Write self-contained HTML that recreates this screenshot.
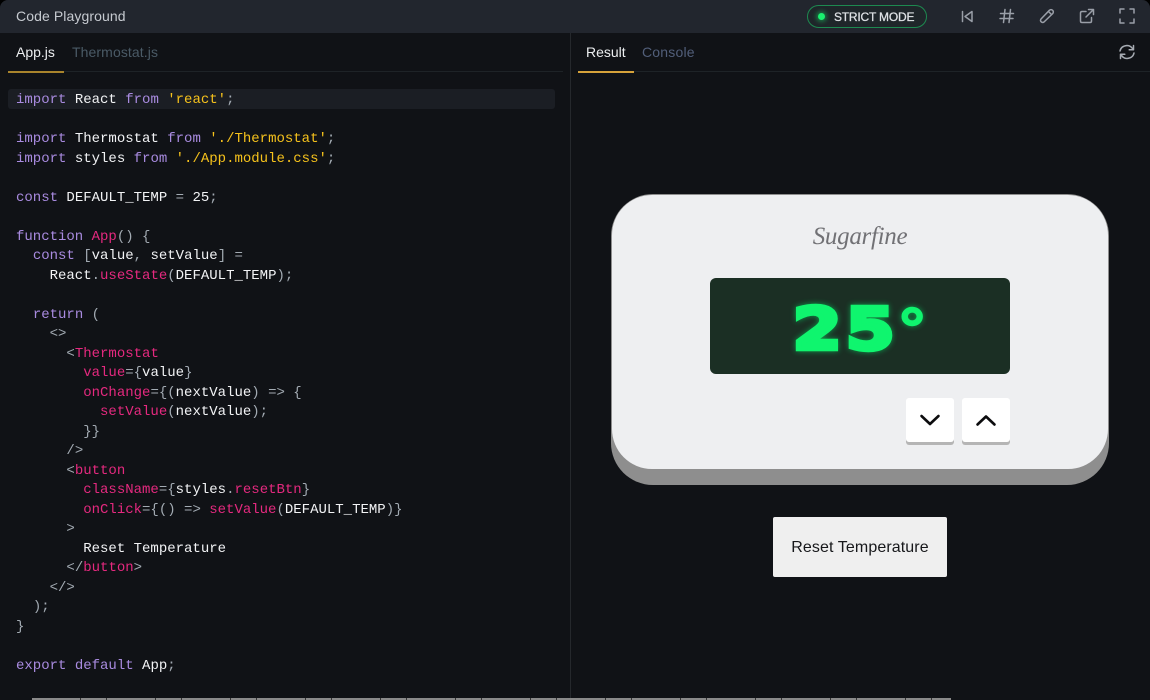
<!DOCTYPE html>
<html><head><meta charset="utf-8"><style>
*{box-sizing:border-box;margin:0;padding:0}
html,body{width:1150px;height:700px;overflow:hidden;background:#000}
body{font-family:"Liberation Sans",sans-serif;position:relative}
#app{position:absolute;left:0;top:0;width:1150px;height:700px;background:#101216;border-radius:8px 8px 0 0;overflow:hidden}
.abs{position:absolute}
#hdr{left:0;top:0;width:1150px;height:33px;background:#22262e}
.tab{position:absolute;top:44px;font-size:14px;line-height:17px;white-space:nowrap}
#code{position:absolute;left:16px;top:91px;font:14px/19.52px "Liberation Mono",monospace;color:#f2f3f5;white-space:pre}
.k{color:#a98be0}.s{color:#f6c21c}.p{color:#e5297f}.g{color:#a3abb3}
svg.ic{position:absolute;fill:none;stroke:#9a9fa8;stroke-width:1.5;stroke-linecap:round;stroke-linejoin:round}
</style></head><body>
<div id="app">
<div class="abs" id="hdr"></div>
<div class="abs" style="left:16px;top:8px;font-size:14px;line-height:17px;color:#c6cad0;letter-spacing:.1px">Code Playground</div>

<div class="abs" style="left:807px;top:5px;width:120px;height:23px;border:1.5px solid #1d8a50;border-radius:12px;background:#1f262a"></div>
<div class="abs" style="left:818px;top:13px;width:7px;height:7px;border-radius:50%;background:#1af06f;box-shadow:0 0 4px 2px rgba(20,220,100,.45)"></div>
<div class="abs" style="left:834px;top:10px;font-size:12px;line-height:14px;color:#dfe2e6;letter-spacing:-.2px;-webkit-text-stroke:.25px #dfe2e6;white-space:nowrap">STRICT MODE</div>

<svg class="ic" style="left:960px;top:9px" width="14" height="15" viewBox="0 0 14 15"><path d="M2.5 2.5v10M12 2.5v10L5 7.5z"/></svg>
<svg class="ic" style="left:999px;top:8px" width="16" height="16" viewBox="0 0 16 16"><path d="M6 1.5L4.5 14.500M11.500 1.500L10 14.500M1.500 5.500H14.500M1 10.500H14"/></svg>
<svg class="ic" style="left:1039px;top:8px" width="16" height="16" viewBox="0 0 16 16"><path d="M2 11L10.500 2.200Q12 1 13.500 2.200T13.800 5.500L5 14Q3.500 15 2.200 13.800T2 11zM9.500 3.500L12.500 6.500"/></svg>
<svg class="ic" style="left:1079px;top:8px" width="16" height="16" viewBox="0 0 16 16"><path d="M7 3.500H3Q1.500 3.500 1.500 5V13Q1.500 14.500 3 14.500H11Q12.500 14.500 12.500 13V9.500M7 9L14.500 1.500M9.500 1.500H14.500V6.500"/></svg>
<svg class="ic" style="left:1119px;top:8px" width="16" height="16" viewBox="0 0 16 16"><path d="M1 5V1H5M11 1H15V5M15 11V15H11M5 15H1V11"/></svg>

<div class="abs" style="left:8px;top:71px;width:555px;height:1px;background:#1e2327"></div>
<div class="abs" style="left:8px;top:71px;width:56px;height:1.500px;background:#a9842c"></div>
<div class="tab" style="left:16px;color:#eceef0">App.js</div>
<div class="tab" style="left:72px;color:#4a5a66;letter-spacing:.1px">Thermostat.js</div>

<div class="abs" style="left:570px;top:33px;width:1px;height:667px;background:#25282c"></div>

<div class="abs" style="left:578px;top:71px;width:572px;height:1px;background:#1e2327"></div>
<div class="abs" style="left:578px;top:71px;width:56px;height:1.500px;background:#d6a23a"></div>
<div class="tab" style="left:586px;color:#eceef0">Result</div>
<div class="tab" style="left:642px;color:#525f7a;letter-spacing:.2px">Console</div>
<svg class="ic" style="left:1118px;top:43px;stroke:#a6abb2" width="18" height="18" viewBox="0 0 18 18"><path d="M2 8Q3 3 9 2.500Q13 2.500 15 6.500M15.500 2.500V6.800H11.200M16 10Q15 15 9 15.500Q5 15.500 3 11.500M2.500 15.500V11.200H6.800"/></svg>

<div class="abs" style="left:8px;top:89px;width:547px;height:19.500px;background:#1b1e24;border-radius:3px"></div>
<div id="code"><span class="k">import</span> React <span class="k">from</span> <span class="s">'react'</span><span class="g">;</span>

<span class="k">import</span> Thermostat <span class="k">from</span> <span class="s">'./Thermostat'</span><span class="g">;</span>
<span class="k">import</span> styles <span class="k">from</span> <span class="s">'./App.module.css'</span><span class="g">;</span>

<span class="k">const</span> DEFAULT_TEMP <span class="g">=</span> 25<span class="g">;</span>

<span class="k">function</span> <span class="p">App</span><span class="g">() {</span>
  <span class="k">const</span> <span class="g">[</span>value<span class="g">,</span> setValue<span class="g">] =</span>
    React<span class="g">.</span><span class="p">useState</span><span class="g">(</span>DEFAULT_TEMP<span class="g">);</span>

  <span class="k">return</span> <span class="g">(</span>
    <span class="g">&lt;&gt;</span>
      <span class="g">&lt;</span><span class="p">Thermostat</span>
        <span class="p">value</span><span class="g">={</span>value<span class="g">}</span>
        <span class="p">onChange</span><span class="g">={(</span>nextValue<span class="g">) =&gt; {</span>
          <span class="p">setValue</span><span class="g">(</span>nextValue<span class="g">);</span>
        <span class="g">}}</span>
      <span class="g">/&gt;</span>
      <span class="g">&lt;</span><span class="p">button</span>
        <span class="p">className</span><span class="g">={</span>styles<span class="g">.</span><span class="p">resetBtn</span><span class="g">}</span>
        <span class="p">onClick</span><span class="g">={() =&gt;</span> <span class="p">setValue</span><span class="g">(</span>DEFAULT_TEMP<span class="g">)}</span>
      <span class="g">&gt;</span>
        Reset Temperature
      <span class="g">&lt;/</span><span class="p">button</span><span class="g">&gt;</span>
    <span class="g">&lt;/&gt;</span>
  <span class="g">);</span>
<span class="g">}</span>

<span class="k">export</span> <span class="k">default</span> App<span class="g">;</span></div>

<div class="abs" style="left:611px;top:194px;width:498px;height:291px;background:#8e8e8e;border-radius:42px"></div>
<div class="abs" style="left:612px;top:195px;width:496px;height:274px;background:#eeeff1;border-radius:40px"></div>
<div class="abs" style="left:611px;top:222px;width:498px;text-align:center;font:italic 25px/30px 'Liberation Serif',serif;color:#717175;letter-spacing:-.3px">Sugarfine</div>

<div class="abs" style="left:710px;top:277.500px;width:300px;height:96px;background:#1b2f24;border-radius:6px"></div>
<svg class="abs" style="left:0;top:0;overflow:visible" width="1150" height="700" viewBox="0 0 1150 700">
<defs><filter id="gl" x="-30%" y="-50%" width="160%" height="200%"><feGaussianBlur stdDeviation="3"/></filter></defs>
<g font-family="'DejaVu Sans',sans-serif" font-weight="700" font-size="58" fill="#0ff56e" stroke="#0ff56e" stroke-width="4.500" stroke-linejoin="miter">
<g filter="url(#gl)" opacity=".55">
<text transform="translate(793 349) scale(1.200 1)">2</text>
<text transform="translate(846 349) scale(1.200 1)">5</text>
<text transform="translate(897 349) scale(1.050 .95)" stroke-width="1.500">°</text>
</g>
<text transform="translate(793 349) scale(1.200 1)">2</text>
<text transform="translate(846 349) scale(1.200 1)">5</text>
<text transform="translate(897 349) scale(1.050 .95)" stroke-width="1.500">°</text>
</g></svg>

<div class="abs" style="left:906px;top:398px;width:48px;height:47px;background:#fff;border-radius:3px;box-shadow:inset 0 -3px 0 #b5b5b5"></div>
<div class="abs" style="left:962px;top:398px;width:48px;height:47px;background:#fff;border-radius:3px;box-shadow:inset 0 -3px 0 #b5b5b5"></div>
<svg class="abs" style="left:906px;top:398px" width="104" height="44" viewBox="0 0 104 44" fill="none" stroke="#0c0c0e" stroke-width="2.600" stroke-linecap="round" stroke-linejoin="round"><path d="M15.500 18L24 26L32.500 18M71.500 26.500L80 18.500L88.500 26.500"/></svg>

<div class="abs" style="left:773px;top:517px;width:174px;height:60px;background:#efefef;border-radius:2px;text-align:center;font-size:16px;line-height:62px;color:#17181b;letter-spacing:.1px">Reset Temperature</div>

<div class="abs" style="left:32px;top:698px;width:919px;height:2px;background:repeating-linear-gradient(90deg,#8a8a8a 0 48px,#333 48px 49px,#8a8a8a 49px 74px,#333 74px 75px)"></div>
</div>
</body></html>
